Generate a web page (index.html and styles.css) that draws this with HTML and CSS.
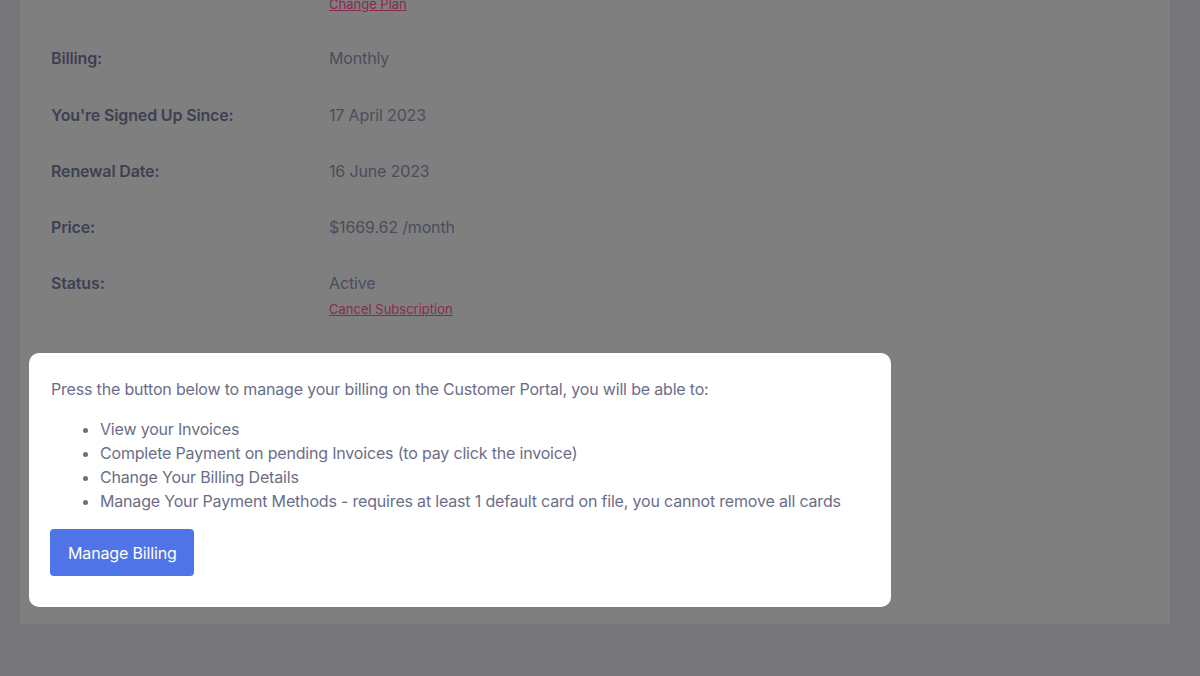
FILE: index.html
```html
<!DOCTYPE html>
<html lang="en">
<head>
<meta charset="utf-8">
<title>Subscription</title>
<link rel="stylesheet" href="styles.css">
</head>
<body>
<main class="panel">
  <div class="row row-plan">
    <div class="label">Plan:</div>
    <div class="value">Business<a class="link" href="#">Change Plan</a></div>
  </div>
  <div class="row">
    <div class="label">Billing:</div>
    <div class="value">Monthly</div>
  </div>
  <div class="row">
    <div class="label">You're Signed Up Since:</div>
    <div class="value">17 April 2023</div>
  </div>
  <div class="row">
    <div class="label">Renewal Date:</div>
    <div class="value">16 June 2023</div>
  </div>
  <div class="row">
    <div class="label">Price:</div>
    <div class="value">$1669.62 /month</div>
  </div>
  <div class="row">
    <div class="label">Status:</div>
    <div class="value">Active<a class="link" href="#">Cancel Subscription</a></div>
  </div>

  <section class="card">
    <p class="intro">Press the button below to manage your billing on the Customer Portal, you will be able to:</p>
    <ul class="list">
      <li>View your Invoices</li>
      <li>Complete Payment on pending Invoices (to pay click the invoice)</li>
      <li>Change Your Billing Details</li>
      <li>Manage Your Payment Methods - requires at least 1 default card on file, you cannot remove all cards</li>
    </ul>
    <button class="btn" type="button">Manage Billing</button>
  </section>
</main>
</body>
</html>
```
FILE: styles.css
```css
* { box-sizing: border-box; }
html, body { margin: 0; padding: 0; }
body {
  background: #767579;
  font-family: Inter, "Noto Sans", "Liberation Sans", sans-serif;
  font-size: 16px;
  line-height: 24px;
  letter-spacing: -0.15px;
  height: 676px;
  overflow: hidden;
}
.panel {
  margin: -50px 0 0 20px;
  width: 1150px;
  background: #7f7f7f;
  padding: 0 9px 17px;
}
.row {
  display: grid;
  grid-template-columns: 278px 1fr;
  padding: 16.125px 0 16.125px 22px;
}
.row-plan { padding-bottom: 18px; }
.label {
  font-weight: 600;
  color: #3d3f52;
}
.value {
  color: #4b4d5c;
}
.link {
  display: block;
  margin-top: 6px;
  font-size: 13px;
  line-height: 16px;
  letter-spacing: 0;
  color: #8a2a4e;
  text-decoration: underline;
}
.card {
  margin-top: 20px;
  width: 862px;
  background: #ffffff;
  border-radius: 10px;
  padding: 24px 22px 31px;
  color: #6b6e86;
  letter-spacing: -0.18px;
}
.intro { margin: 0; }
.list {
  margin: 16px 0;
  padding-left: 49px;
}
.btn {
  display: block;
  font-family: inherit;
  font-size: 16px;
  line-height: 24px;
  letter-spacing: -0.15px;
  color: #ffffff;
  background: #4f74e8;
  border: 0;
  border-radius: 4px;
  padding: 12px 17px 11px 18px;
  margin-left: -1px;
}
```
